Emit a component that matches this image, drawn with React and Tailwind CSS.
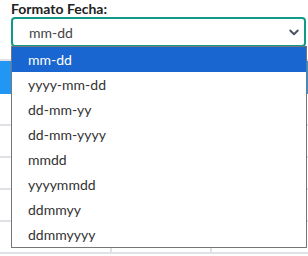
import React from 'react';

const FORMATS = ['mm-dd', 'yyyy-mm-dd', 'dd-mm-yy', 'dd-mm-yyyy', 'mmdd', 'yyyymmdd', 'ddmmyy', 'ddmmyyyy'];

function Chevron() {
  return (
    <svg width="12" height="12" viewBox="0 0 16 16" className="text-[#4b5563]">
      <path d="M3 6l5 5 5-5" fill="none" stroke="currentColor" strokeWidth="2.6" strokeLinecap="round" strokeLinejoin="round" />
    </svg>
  );
}

export default function App() {
  const rows = [0, 1, 2, 3, 4];

  return (
    <div className="relative w-[308px] h-[256px] overflow-hidden bg-white font-['Lato','Liberation_Sans',sans-serif]">
      {/* Field */}
      <div className="pl-[11px] pr-[2px]">
        <p className="text-[14px] font-bold text-[#222] leading-[17px] pt-[0px]">Formato Fecha:</p>
        <div className="h-[30px] border-2 border-[#129a88] rounded-[4px] flex items-center justify-between pl-[16px] pr-[4px]">
          <span className="text-[14px] text-[#444]">mm-dd</span>
          <Chevron />
        </div>
      </div>

      {/* Table behind */}
      <div className="mt-[12px]">
        <div className="h-[35px] bg-[#2196f3] border-t-2 border-[#dee2e6]" />
        {rows.map((r) => (
          <div key={r} className="h-[32px] border-b-2 border-[#dee2e6] grid grid-cols-[112px_100px_1fr]">
            <div className="border-r-2 border-[#dee2e6]" />
            <div className="border-r-2 border-[#dee2e6]" />
            <div />
          </div>
        ))}
      </div>

      {/* Open list */}
      <ul className="absolute left-[11px] top-[46px] w-[296px] border border-[#767676] bg-white">
        {FORMATS.map((f, i) => (
          <li
            key={f}
            className={`h-[25px] flex items-center pl-[16px] text-[14px] ${i === 0 ? 'bg-[#1a66d0] text-white' : 'text-[#333]'}`}
          >
            {f}
          </li>
        ))}
      </ul>
    </div>
  );
}
